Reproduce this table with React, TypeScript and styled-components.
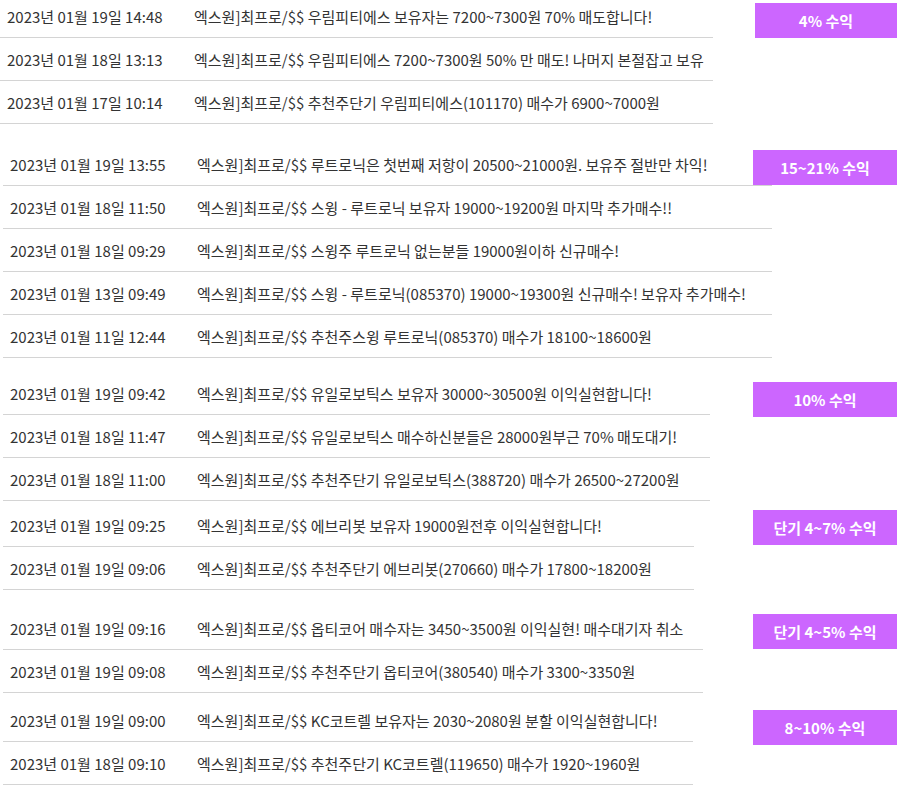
import React from "react";
import styled, { createGlobalStyle } from "styled-components";

type Post = { date: string; text: string };

type Group = {
  gap: number;
  left: number;
  width: number;
  badgeTop: number;
  badgeWidth?: number;
  badge: string;
  posts: Post[];
};

const PREFIX = "엑스원]최프로/$$ ";

const groups: Group[] = [
  {
    gap: -5,
    left: 0,
    width: 713,
    badgeTop: 8,
    badgeWidth: 142,
    badge: "4% 수익",
    posts: [
      { date: "2023년 01월 19일 14:48", text: "우림피티에스 보유자는 7200~7300원 70% 매도합니다!" },
      { date: "2023년 01월 18일 13:13", text: "우림피티에스 7200~7300원 50% 만 매도! 나머지 본절잡고 보유" },
      { date: "2023년 01월 17일 10:14", text: "추천주단기 우림피티에스(101170) 매수가 6900~7000원" },
    ],
  },
  {
    gap: 19,
    left: 3,
    width: 769,
    badgeTop: 7,
    badge: "15~21% 수익",
    posts: [
      { date: "2023년 01월 19일 13:55", text: "루트로닉은 첫번째 저항이 20500~21000원. 보유주 절반만 차익!" },
      { date: "2023년 01월 18일 11:50", text: "스윙 - 루트로닉 보유자 19000~19200원 마지막 추가매수!!" },
      { date: "2023년 01월 18일 09:29", text: "스윙주 루트로닉 없는분들 19000원이하 신규매수!" },
      { date: "2023년 01월 13일 09:49", text: "스윙 - 루트로닉(085370) 19000~19300원 신규매수! 보유자 추가매수!" },
      { date: "2023년 01월 11일 12:44", text: "추천주스윙 루트로닉(085370) 매수가 18100~18600원" },
    ],
  },
  {
    gap: 14,
    left: 3,
    width: 707,
    badgeTop: 10,
    badge: "10% 수익",
    posts: [
      { date: "2023년 01월 19일 09:42", text: "유일로보틱스 보유자 30000~30500원 이익실현합니다!" },
      { date: "2023년 01월 18일 11:47", text: "유일로보틱스 매수하신분들은 28000원부근 70% 매도대기!" },
      { date: "2023년 01월 18일 11:00", text: "추천주단기 유일로보틱스(388720) 매수가 26500~27200원" },
    ],
  },
  {
    gap: 3,
    left: 3,
    width: 691,
    badgeTop: 6,
    badge: "단기 4~7% 수익",
    posts: [
      { date: "2023년 01월 19일 09:25", text: "에브리봇 보유자 19000원전후 이익실현합니다!" },
      { date: "2023년 01월 19일 09:06", text: "추천주단기 에브리봇(270660) 매수가 17800~18200원" },
    ],
  },
  {
    gap: 17,
    left: 3,
    width: 700,
    badgeTop: 7,
    badge: "단기 4~5% 수익",
    posts: [
      { date: "2023년 01월 19일 09:16", text: "옵티코어 매수자는 3450~3500원 이익실현! 매수대기자 취소" },
      { date: "2023년 01월 19일 09:08", text: "추천주단기 옵티코어(380540) 매수가 3300~3350원" },
    ],
  },
  {
    gap: 6,
    left: 3,
    width: 690,
    badgeTop: 11,
    badge: "8~10% 수익",
    posts: [
      { date: "2023년 01월 19일 09:00", text: "KC코트렐 보유자는 2030~2080원 분할 이익실현합니다!" },
      { date: "2023년 01월 18일 09:10", text: "추천주단기 KC코트렐(119650) 매수가 1920~1960원" },
    ],
  },
];

const GlobalStyle = createGlobalStyle`
  html, body {
    margin: 0;
    padding: 0;
    background: #fff;
  }
  body {
    font-family: "Noto Sans CJK KR", "Noto Sans", "Liberation Sans", sans-serif;
    color: #333;
    overflow: hidden;
  }
`;

const App = () => {
  return (
    <>
      <GlobalStyle />
      <Page>
        {groups.map((g, i) => (
          <GroupRow key={i} $gap={g.gap}>
            <Board $left={g.left} $width={g.width}>
              {g.posts.map((p, j) => (
                <Row key={j}>
                  <DateCell>{p.date}</DateCell>
                  <Subject>
                    {PREFIX}
                    {p.text}
                  </Subject>
                </Row>
              ))}
            </Board>
            <Badge $top={g.badgeTop} $width={g.badgeWidth ?? 144}>
              {g.badge}
            </Badge>
          </GroupRow>
        ))}
      </Page>
    </>
  );
};

const Page = styled.div`
  width: 899px;
  display: flex;
  flex-direction: column;
`;

// board and badge share one grid cell, the badge sits on the right
const GroupRow = styled.div<{ $gap: number }>`
  display: grid;
  grid-template-columns: 1fr;
  align-items: start;
  margin-top: ${(p) => p.$gap}px;
`;

const Board = styled.div<{ $left: number; $width: number }>`
  grid-area: 1 / 1;
  margin-left: ${(p) => p.$left}px;
  width: ${(p) => p.$width}px;
  display: flex;
  flex-direction: column;
`;

const Row = styled.div`
  height: 42px;
  display: flex;
  align-items: center;
  border-bottom: 1px solid #d4d4d4;
  font-size: 15px;
  white-space: nowrap;
`;

const DateCell = styled.span`
  width: 194px;
  flex-shrink: 0;
  padding-left: 7px;
  box-sizing: border-box;
  color: #333;
`;

const Subject = styled.span`
  color: #333;
`;

const Badge = styled.div<{ $top: number; $width: number }>`
  grid-area: 1 / 1;
  justify-self: end;
  position: relative;
  margin-right: 2px;
  margin-top: ${(p) => p.$top}px;
  width: ${(p) => p.$width}px;
  height: 35px;
  display: flex;
  align-items: center;
  justify-content: center;
  background: #cc66ff;
  color: #fff;
  font-size: 15px;
  font-weight: 700;
`;

export default App;
